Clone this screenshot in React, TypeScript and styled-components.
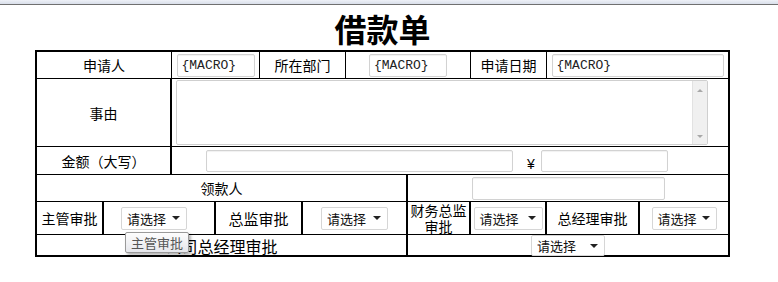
import styled, { createGlobalStyle } from 'styled-components';

const GlobalStyle = createGlobalStyle`
  html, body {
    margin: 0;
    padding: 0;
    background: #fff;
  }
  body {
    font-family: "Noto Sans CJK SC", "Noto Sans", sans-serif;
    color: #000;
  }
`;

export default function App() {
  return (
    <>
      <GlobalStyle />
      <TopStrip />
      <Sheet>
        <Title>借款单</Title>
        <Table>
          <Row $h={26} $cols="134px 88px 86px 125px 76px 1fr" $first>
            <Cell $line={0}>申请人</Cell>
            <Cell><Field readOnly value="{MACRO}" $w={78} /></Cell>
            <Cell>所在部门</Cell>
            <Cell><Field readOnly value="{MACRO}" $w={78} /></Cell>
            <Cell>申请日期</Cell>
            <Cell><Field readOnly value="{MACRO}" $w={172} /></Cell>
          </Row>

          <Row $h={68} $cols="133px 1fr">
            <Cell $line={0}>事由</Cell>
            <Cell $line={2} $align="start">
              <MemoBox>
                <Memo />
                <ScrollTrack>
                  <Arrow $up />
                  <Arrow />
                </ScrollTrack>
              </MemoBox>
            </Cell>
          </Row>

          <Row $h={28} $cols="133px 1fr">
            <Cell $line={0}>金额（大写）</Cell>
            <Cell $line={2} $align="start">
              <AmountLine>
                <Field readOnly value="" $w={307} $h={22} />
                <Yen>¥</Yen>
                <Field readOnly value="" $w={127} $h={22} />
              </AmountLine>
            </Cell>
          </Row>

          <Row $h={27} $cols="369px 1fr">
            <Cell $line={0}>领款人</Cell>
            <Cell $line={2}><Field readOnly value="" $w={193} /></Cell>
          </Row>

          <Row $h={33} $cols="65px 112px 87px 105px 63px 76px 93px 1fr">
            <Cell $line={0} $size={14}>主管审批</Cell>
            <Cell $line={2}>
              <PickerWrap>
                <Picker $w={66}>请选择<Caret /></Picker>
                <Tip>主管审批</Tip>
              </PickerWrap>
            </Cell>
            <Cell $line={2} $size={15}>总监审批</Cell>
            <Cell $line={2}><Picker $w={67}>请选择<Caret /></Picker></Cell>
            <Cell $line={2}><Stacked>财务总监<br />审批</Stacked></Cell>
            <Cell $line={2}><Picker $w={69}>请选择<Caret /></Picker></Cell>
            <Cell $line={2} $size={14}>总经理审批</Cell>
            <Cell $line={2}><Picker $w={65}>请选择<Caret /></Picker></Cell>
          </Row>

          <Row $h={21} $cols="369px 1fr">
            <Cell $line={0} $size={16}>公司总经理审批</Cell>
            <Cell $line={2}><Picker $w={74} $h={21}>请选择<Caret /></Picker></Cell>
          </Row>
        </Table>
      </Sheet>
    </>
  );
}

const TopStrip = styled.div`
  height: 4px;
  background: linear-gradient(#eef1f7, #d9dfea);
  border-bottom: 1px solid #707070;
`;

const Sheet = styled.div`
  width: 695px;
  margin-left: 35px;
`;

const Title = styled.h1`
  margin: 0;
  height: 45px;
  line-height: 47px;
  text-align: center;
  font-size: 32px;
  font-weight: 700;
  color: #000;
`;

const Table = styled.div`
  width: 695px;
  border: 2px solid #000;
  box-sizing: border-box;
`;

const Row = styled.div<{ $h: number; $cols: string; $first?: boolean }>`
  display: grid;
  grid-template-columns: ${({ $cols }) => $cols};
  height: ${({ $h }) => $h}px;
  border-top: ${({ $first }) => ($first ? 'none' : '1px solid #000')};
  box-sizing: ${({ $first }) => ($first ? 'content-box' : 'border-box')};
`;

const Cell = styled.div<{ $line?: number; $align?: 'start' | 'center'; $size?: number }>`
  position: relative;
  display: flex;
  align-items: center;
  justify-content: ${({ $align }) => ($align === 'start' ? 'flex-start' : 'center')};
  border-left: ${({ $line = 1 }) => $line}px solid #000;
  font-size: ${({ $size = 14 }) => $size}px;
  line-height: 1;
  white-space: nowrap;
  min-width: 0;
`;

const Field = styled.input<{ $w: number; $h?: number }>`
  width: ${({ $w }) => $w}px;
  height: ${({ $h = 23 }) => $h}px;
  box-sizing: border-box;
  margin: 0;
  padding: 0 4px;
  border: 1px solid #d2d2d2;
  border-radius: 2px;
  box-shadow: inset 0 1px 1px rgba(0, 0, 0, 0.06);
  background: #fff;
  font-family: "Liberation Mono", monospace;
  font-size: 13px;
  color: #222;
  outline: none;
`;

const MemoBox = styled.div`
  display: flex;
  width: 532px;
  height: 65px;
  margin-left: 4px;
  box-sizing: border-box;
  border: 1px solid #cfcfcf;
  border-radius: 2px;
  background: #fff;
`;

const Memo = styled.textarea`
  flex: 1;
  border: none;
  resize: none;
  outline: none;
  background: transparent;
  overflow: hidden;
`;

const ScrollTrack = styled.div`
  width: 15px;
  display: flex;
  flex-direction: column;
  justify-content: space-between;
  align-items: center;
  padding: 8px 0 6px;
  box-sizing: border-box;
  background: #f0f0f0;
  border-left: 1px solid #e2e2e2;
`;

const Arrow = styled.span<{ $up?: boolean }>`
  width: 0;
  height: 0;
  border-left: 3px solid transparent;
  border-right: 3px solid transparent;
  border-top: ${({ $up }) => ($up ? 'none' : '3px solid #a8a8a8')};
  border-bottom: ${({ $up }) => ($up ? '3px solid #a8a8a8' : 'none')};
`;

const AmountLine = styled.div`
  display: flex;
  align-items: center;
  padding-left: 34px;
`;

const Yen = styled.span`
  margin: 6px 4px 0 14px;
  font-family: "Liberation Sans", sans-serif;
  font-size: 14px;
  width: 10px;
`;

const PickerWrap = styled.div`
  position: relative;
  margin-right: 10px;
`;

const Picker = styled.div<{ $w: number; $h?: number }>`
  display: flex;
  align-items: center;
  justify-content: space-between;
  width: ${({ $w }) => $w}px;
  height: ${({ $h = 23 }) => $h}px;
  box-sizing: border-box;
  padding: 0 6px 0 5px;
  border: 1px solid #d6d6d6;
  border-radius: 2px;
  background: #fff;
  font-size: 13px;
  color: #111;
`;

const Caret = styled.span`
  flex: none;
  width: 0;
  height: 0;
  border-left: 4px solid transparent;
  border-right: 4px solid transparent;
  border-top: 4px solid #222;
`;

const Stacked = styled.div`
  font-size: 14px;
  line-height: 16px;
  text-align: center;
  white-space: nowrap;
`;

const Tip = styled.div`
  position: absolute;
  left: 4px;
  top: 25px;
  z-index: 5;
  padding: 0 5px;
  height: 21px;
  line-height: 20px;
  box-sizing: border-box;
  border: 1px solid #9a9a9a;
  border-radius: 2px;
  background: linear-gradient(#fdfdfd, #e6e7ec);
  box-shadow: 2px 2px 3px rgba(0, 0, 0, 0.3);
  font-size: 13px;
  color: #555;
  white-space: nowrap;
`;
